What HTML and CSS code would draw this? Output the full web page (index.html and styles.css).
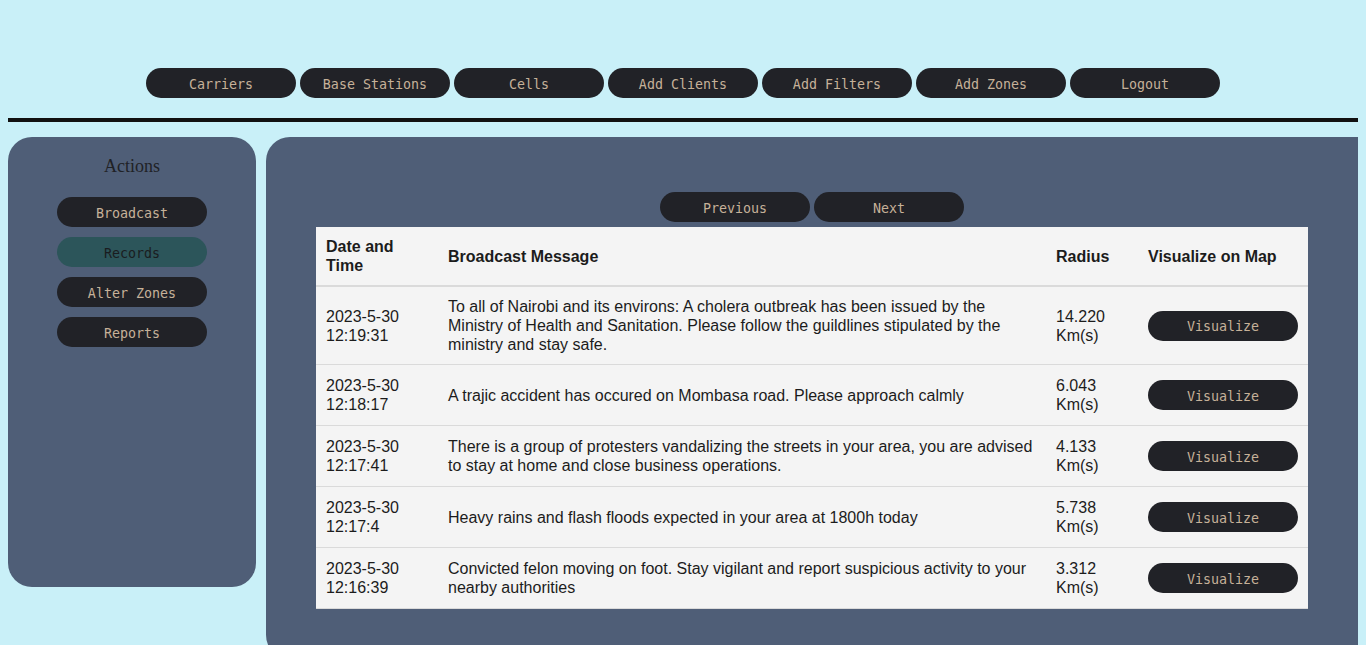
FILE: index.html
```html
<!DOCTYPE html>
<html lang="en">
<head>
<meta charset="utf-8">
<title>Records</title>
<link rel="stylesheet" href="styles.css">
</head>
<body>
<header class="topbar">
  <nav class="topnav">
    <button class="btn">Carriers</button>
    <button class="btn">Base Stations</button>
    <button class="btn">Cells</button>
    <button class="btn">Add Clients</button>
    <button class="btn">Add Filters</button>
    <button class="btn">Add Zones</button>
    <button class="btn">Logout</button>
  </nav>
</header>
<hr class="divider">
<div class="layout">
  <aside class="sidebar">
    <h3 class="sidebar-title">Actions</h3>
    <div class="side-actions">
      <button class="btn">Broadcast</button>
      <button class="btn btn-active">Records</button>
      <button class="btn">Alter Zones</button>
      <button class="btn">Reports</button>
    </div>
  </aside>
  <main class="content">
    <div class="pager">
      <button class="btn">Previous</button>
      <button class="btn">Next</button>
    </div>
    <table class="records">
      <colgroup>
        <col class="c-date">
        <col class="c-msg">
        <col class="c-radius">
        <col class="c-vis">
      </colgroup>
      <thead>
        <tr>
          <th>Date and Time</th>
          <th>Broadcast Message</th>
          <th>Radius</th>
          <th>Visualize on Map</th>
        </tr>
      </thead>
      <tbody>
        <tr>
          <td>2023-5-30 12:19:31</td>
          <td>To all of Nairobi and its environs: A cholera outbreak has been issued by the Ministry of Health and Sanitation. Please follow the guildlines stipulated by the ministry and stay safe.</td>
          <td>14.220 Km(s)</td>
          <td><button class="btn">Visualize</button></td>
        </tr>
        <tr>
          <td>2023-5-30 12:18:17</td>
          <td>A trajic accident has occured on Mombasa road. Please approach calmly</td>
          <td>6.043 Km(s)</td>
          <td><button class="btn">Visualize</button></td>
        </tr>
        <tr>
          <td>2023-5-30 12:17:41</td>
          <td>There is a group of protesters vandalizing the streets in your area, you are advised to stay at home and close business operations.</td>
          <td>4.133 Km(s)</td>
          <td><button class="btn">Visualize</button></td>
        </tr>
        <tr>
          <td>2023-5-30 12:17:4</td>
          <td>Heavy rains and flash floods expected in your area at 1800h today</td>
          <td>5.738 Km(s)</td>
          <td><button class="btn">Visualize</button></td>
        </tr>
        <tr>
          <td>2023-5-30 12:16:39</td>
          <td>Convicted felon moving on foot. Stay vigilant and report suspicious activity to your nearby authorities</td>
          <td>3.312 Km(s)</td>
          <td><button class="btn">Visualize</button></td>
        </tr>
      </tbody>
    </table>
  </main>
</div>
</body>
</html>
```

FILE: styles.css
```css
html, body {
  background: #c9f0f8;
}

body {
  margin: 8px;
  font-family: "Liberation Serif", serif;
  overflow: hidden;
}

.btn {
  width: 150px;
  height: 30px;
  border: none;
  border-radius: 15px;
  background: #212227;
  color: #c6b199;
  font-family: "DejaVu Sans Mono", "Liberation Mono", monospace;
  font-size: 13.33px;
  padding: 2px 0 0;
  margin: 0;
  cursor: pointer;
}

.btn-active {
  background: #2c555a;
  color: #1a1c20;
}

.topbar {
  padding-top: 60px;
}

.topnav {
  display: flex;
  justify-content: center;
  gap: 4px;
}

.divider {
  margin: 20px 0 15px;
  border: none;
  height: 4px;
  background: #111111;
}

.layout {
  display: flex;
  gap: 10px;
  align-items: flex-start;
}

.sidebar {
  flex: 0 0 248px;
  height: 450px;
  background: #4f5e77;
  border-radius: 24px;
  display: flex;
  flex-direction: column;
  align-items: center;
}

.sidebar-title {
  margin: 18px 0 0;
  font-family: "Liberation Serif", serif;
  font-weight: normal;
  font-size: 18px;
  line-height: 22px;
  color: #1f2226;
}

.side-actions {
  margin-top: 20px;
  display: flex;
  flex-direction: column;
  gap: 10px;
}

.content {
  flex: 1;
  min-width: 0;
  background: #4f5e77;
  border-radius: 24px 0 0 24px;
  padding: 55px 50px 50px;
}

.pager {
  display: flex;
  justify-content: center;
  gap: 4px;
  margin-bottom: 5px;
}

.records {
  width: 100%;
  border-collapse: collapse;
  background: #f4f4f4;
  font-family: "Liberation Sans", Arial, sans-serif;
  font-size: 16px;
  line-height: 19px;
  color: #1c1c1c;
  table-layout: fixed;
}

.c-date { width: 122px; }
.c-msg { width: 608px; }
.c-radius { width: 92px; }
.c-vis { width: 170px; }

.records th,
.records td {
  padding: 10px;
  text-align: left;
  vertical-align: middle;
}

.records th {
  font-weight: bold;
  border-bottom: 2px solid #dadada;
}

.records td {
  border-bottom: 1px solid #dadada;
}

.records td .btn {
  display: block;
  margin: 5px 0;
}
```
